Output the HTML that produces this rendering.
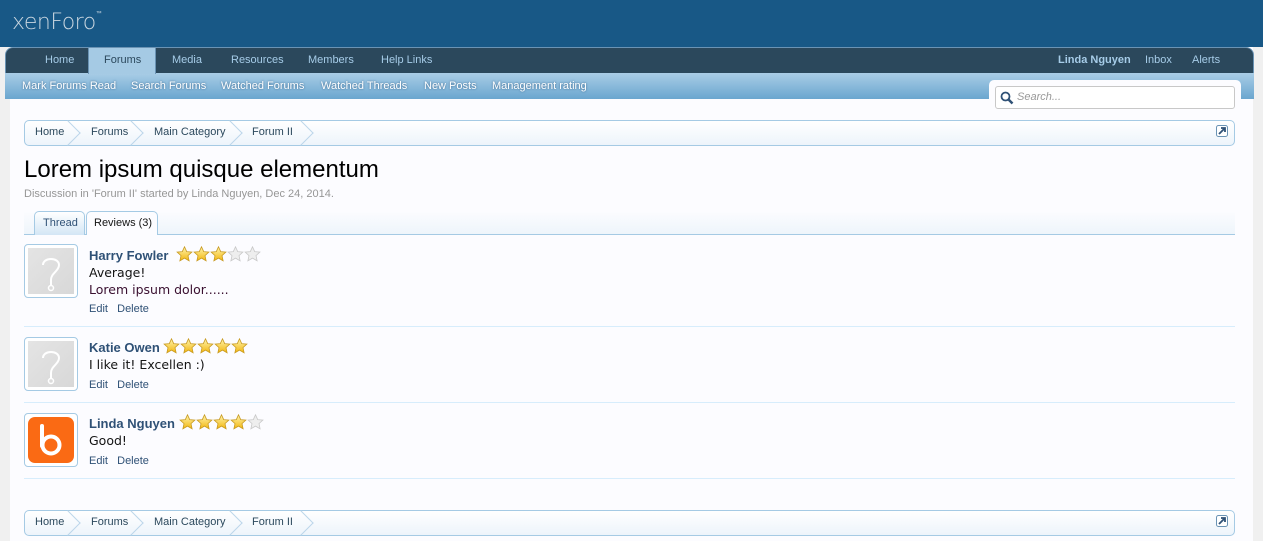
<!DOCTYPE html>
<html><head><meta charset="utf-8"><style>
*{margin:0;padding:0;box-sizing:border-box}
body{width:1263px;height:541px;overflow:hidden;background:#f0f0f0;font-family:"Liberation Sans",sans-serif;position:relative}
.a{position:absolute;white-space:nowrap}
#hdr{left:0;top:0;width:1263px;height:47px;background:#185886}
#logo{left:12px;top:10px;font-family:"DejaVu Sans",sans-serif;font-weight:200;font-size:22px;color:#c9d6e0;letter-spacing:-0.5px}
#main{left:10px;top:47px;width:1243px;height:494px;background:#fcfcff}
#nav{left:5px;top:47px;width:1249px;height:26px;background:#2b485c;border-radius:8px 8px 0 0;border:1px solid #6a93b4;border-bottom:none}
#sub{left:5px;top:73px;width:1249px;height:26px;background:linear-gradient(#a9cde6,#6aa6cf)}
.n{font-size:11px;color:#a6cce8;top:54px}
.s{font-size:11px;color:#fff;top:80px;text-shadow:0 0 2px #37628a}
#ftab{left:88px;top:47px;width:68px;height:27px;background:#a5cae4;border:1px solid #6a93b4;border-bottom:none}
#srch{left:989px;top:80px;width:252px;height:32px;background:#fcfcff;border-radius:5px}
#sbox{left:995px;top:86px;width:240px;height:23px;border:1px solid #c8c8c8;border-radius:3px;background:#fff}
.bc{left:24px;width:1211px;height:26px;border:1px solid #a5cae4;border-radius:5px;background:linear-gradient(#fff,#edf4fb)}
.bt{font-size:11px;color:#2b485c}
.bs{width:18px;height:18px;border-top:1px solid #bcd6ea;border-right:1px solid #bcd6ea;transform:rotate(45deg)}
.star{display:inline-block;width:17px;height:16px;vertical-align:-2px}
.nm{font-size:13px;font-weight:bold;color:#2f5176}
.tx{font-size:12.5px;color:#141414;font-family:"DejaVu Sans",sans-serif}
.ed{font-size:11px;color:#2f5176}
.av{left:24px;width:54px;height:54px;border:1px solid #a5cae4;border-radius:4px;background:#fff;padding:3px}
.sep{left:24px;width:1211px;height:1px;background:#d7edfc}
</style></head><body>
<div class="a" id="hdr"></div>
<div class="a" id="logo">xenForo<span style="font-size:6px;vertical-align:top">™</span></div>
<div class="a" id="main"></div>
<div class="a" id="nav"></div>
<div class="a" id="sub"></div>
<div class="a" id="ftab"></div>
<div class="a n" style="left:45px">Home</div>
<div class="a n" style="left:104px;color:#2b485c">Forums</div>
<div class="a n" style="left:172px">Media</div>
<div class="a n" style="left:231px">Resources</div>
<div class="a n" style="left:308px">Members</div>
<div class="a n" style="left:381px">Help Links</div>
<div class="a n" style="left:1058px;font-weight:bold">Linda Nguyen</div>
<div class="a n" style="left:1145px">Inbox</div>
<div class="a n" style="left:1192px">Alerts</div>
<div class="a s" style="left:22px">Mark Forums Read</div>
<div class="a s" style="left:131px">Search Forums</div>
<div class="a s" style="left:221px">Watched Forums</div>
<div class="a s" style="left:321px">Watched Threads</div>
<div class="a s" style="left:424px">New Posts</div>
<div class="a s" style="left:492px">Management rating</div>
<div class="a" id="srch"></div>
<div class="a" id="sbox"></div>
<svg class="a" style="left:1000px;top:91px" width="14" height="14" viewBox="0 0 14 14"><circle cx="5.5" cy="5.5" r="4" fill="none" stroke="#2f5176" stroke-width="1.8"/><line x1="8.5" y1="8.5" x2="12.5" y2="12.5" stroke="#2f5176" stroke-width="2.5"/></svg>
<div class="a" style="left:1017px;top:91px;font-size:11px;font-style:italic;color:#999">Search...</div>

<div class="a bc" style="top:120px"></div>
<div class="a bt" style="left:35px;top:126px">Home</div>
<div class="a bs" style="left:59px;top:124px"></div>
<div class="a bt" style="left:91px;top:126px">Forums</div>
<div class="a bs" style="left:122px;top:124px"></div>
<div class="a bt" style="left:154px;top:126px">Main Category</div>
<div class="a bs" style="left:221px;top:124px"></div>
<div class="a bt" style="left:252px;top:126px">Forum II</div>
<div class="a bs" style="left:292px;top:124px"></div>
<svg class="a" style="left:1216px;top:125px" width="12" height="12"><rect x=".5" y=".5" width="11" height="11" rx="2" fill="#fff" stroke="#6a93b4"/><path d="M3 9L9 3M5 3h4v4" stroke="#2f5176" stroke-width="1.8" fill="none"/></svg>

<div class="a" style="left:24px;top:156px;font-size:24px;color:#000">Lorem ipsum quisque elementum</div>
<div class="a" style="left:24px;top:188px;font-size:11px;color:#969696">Discussion in 'Forum II' started by Linda Nguyen, Dec 24, 2014.</div>
<div class="a" style="left:24px;top:211px;width:1211px;height:23px;background:linear-gradient(#fcfcff,#eef5fb)"></div>
<div class="a" style="left:24px;top:234px;width:1211px;height:1px;background:#a5cae4"></div>
<div class="a" style="left:34px;top:211px;width:51px;height:24px;border:1px solid #a5cae4;border-bottom:none;border-radius:5px 5px 0 0;background:linear-gradient(#fff,#d3e6f5);font-size:11px;color:#2f5176;padding:5px 0 0 8px">Thread</div>
<div class="a" style="left:86px;top:211px;width:72px;height:24px;border:1px solid #a5cae4;border-bottom:none;border-radius:5px 5px 0 0;background:#fcfcff;font-size:11px;color:#141414;padding:5px 0 0 7px">Reviews (3)</div>

<svg width="0" height="0" style="position:absolute"><defs>
<linearGradient id="g" x1="0" y1="0" x2="0" y2="1"><stop offset="0" stop-color="#fff6b0"/><stop offset="1" stop-color="#f2b60f"/></linearGradient>
<symbol id="sf" viewBox="0 0 17 16"><polygon points="8.5,0.8 10.7,5.6 15.9,6.1 12,9.6 13.1,14.8 8.5,12.1 3.9,14.8 5,9.6 1.1,6.1 6.3,5.6" fill="url(#g)" stroke="#c89a20" stroke-width=".8"/></symbol>
<symbol id="se" viewBox="0 0 17 16"><polygon points="8.5,0.8 10.7,5.6 15.9,6.1 12,9.6 13.1,14.8 8.5,12.1 3.9,14.8 5,9.6 1.1,6.1 6.3,5.6" fill="#eee" stroke="#c8c8c8" stroke-width=".8"/></symbol>
</defs></svg>

<div class="a av" style="top:244px"><div style="width:46px;height:46px;background:linear-gradient(135deg,#e4e4e4,#d8d8d8)"><svg width="46" height="46"><path d="M15 17c0-8 16-8 16 0 0 6-8 8-8 15v5" fill="none" stroke="#fff" stroke-width="2"/><circle cx="23" cy="40" r="2.5" fill="none" stroke="#fff" stroke-width="1.5"/></svg></div></div>
<div class="a nm" style="left:89px;top:246px">Harry Fowler <span style="margin-left:4px"><svg class="star"><use href="#sf"/></svg><svg class="star"><use href="#sf"/></svg><svg class="star"><use href="#sf"/></svg><svg class="star"><use href="#se"/></svg><svg class="star"><use href="#se"/></svg></span></div>
<div class="a tx" style="left:89px;top:265px">Average!</div>
<div class="a tx" style="left:89px;top:282px;color:#3a1030">Lorem ipsum dolor......</div>
<div class="a ed" style="left:89px;top:303px">Edit &nbsp; Delete</div>
<div class="a sep" style="top:326px"></div>

<div class="a av" style="top:337px"><div style="width:46px;height:46px;background:linear-gradient(135deg,#e4e4e4,#d8d8d8)"><svg width="46" height="46"><path d="M15 17c0-8 16-8 16 0 0 6-8 8-8 15v5" fill="none" stroke="#fff" stroke-width="2"/><circle cx="23" cy="40" r="2.5" fill="none" stroke="#fff" stroke-width="1.5"/></svg></div></div>
<div class="a nm" style="left:89px;top:338px">Katie Owen <svg class="star"><use href="#sf"/></svg><svg class="star"><use href="#sf"/></svg><svg class="star"><use href="#sf"/></svg><svg class="star"><use href="#sf"/></svg><svg class="star"><use href="#sf"/></svg></div>
<div class="a tx" style="left:89px;top:357px">I like it! Excellen :)</div>
<div class="a ed" style="left:89px;top:379px">Edit &nbsp; Delete</div>
<div class="a sep" style="top:402px"></div>

<div class="a av" style="top:413px"><div style="width:46px;height:46px;background:#fa6a14;border-radius:7px"><svg width="46" height="46"><path d="M14 9v20" stroke="#fff" stroke-width="4" stroke-linecap="round" fill="none"/><circle cx="23" cy="28" r="8.5" fill="none" stroke="#fff" stroke-width="4"/></svg></div></div>
<div class="a nm" style="left:89px;top:414px">Linda Nguyen <svg class="star"><use href="#sf"/></svg><svg class="star"><use href="#sf"/></svg><svg class="star"><use href="#sf"/></svg><svg class="star"><use href="#sf"/></svg><svg class="star"><use href="#se"/></svg></div>
<div class="a tx" style="left:89px;top:433px">Good!</div>
<div class="a ed" style="left:89px;top:455px">Edit &nbsp; Delete</div>
<div class="a sep" style="top:478px"></div>

<div class="a bc" style="top:510px"></div>
<div class="a bt" style="left:35px;top:516px">Home</div>
<div class="a bs" style="left:59px;top:514px"></div>
<div class="a bt" style="left:91px;top:516px">Forums</div>
<div class="a bs" style="left:122px;top:514px"></div>
<div class="a bt" style="left:154px;top:516px">Main Category</div>
<div class="a bs" style="left:221px;top:514px"></div>
<div class="a bt" style="left:252px;top:516px">Forum II</div>
<div class="a bs" style="left:292px;top:514px"></div>
<svg class="a" style="left:1216px;top:515px" width="12" height="12"><rect x=".5" y=".5" width="11" height="11" rx="2" fill="#fff" stroke="#6a93b4"/><path d="M3 9L9 3M5 3h4v4" stroke="#2f5176" stroke-width="1.8" fill="none"/></svg>
</body></html>
